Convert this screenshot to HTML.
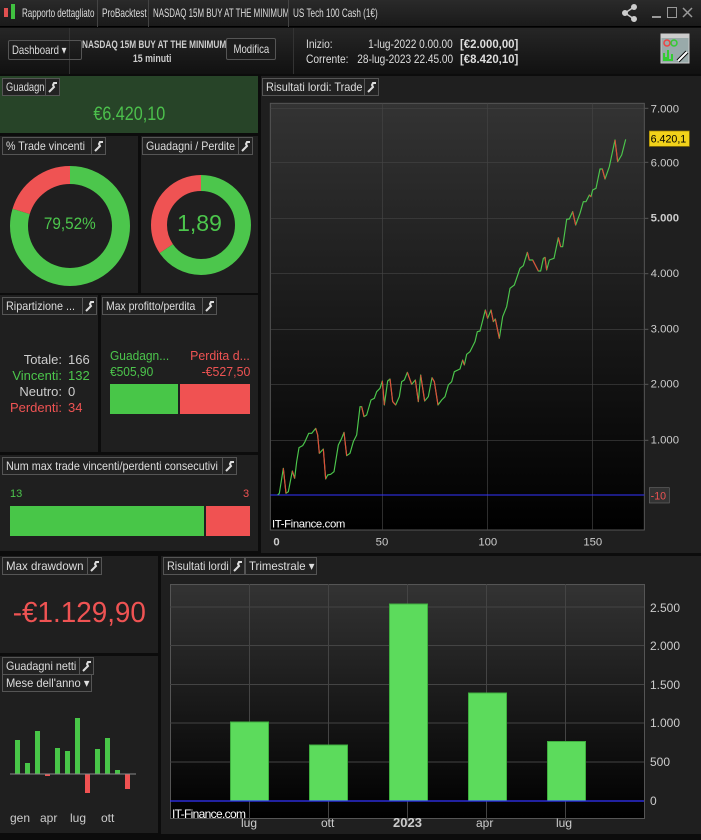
<!DOCTYPE html>
<html><head><meta charset="utf-8"><style>
*{margin:0;padding:0;box-sizing:border-box}
body{width:701px;height:840px;background:#0c0c0c;font-family:"Liberation Sans",sans-serif;color:#ddd;position:relative;overflow:hidden;font-size:11px}
.abs{position:absolute;white-space:nowrap}
.p{position:absolute;background:#1f1f1f}
.t{display:inline-block;transform:scaleX(.74);transform-origin:0 50%;white-space:nowrap}
.tc{display:inline-block;transform:scaleX(.8);transform-origin:50% 50%;white-space:nowrap}
.tag{position:absolute;height:18px;border:1px solid #555;background:#222;color:#ddd;font-size:12px;line-height:16px;padding-left:3px;white-space:nowrap;overflow:hidden}
.w{position:absolute;width:15px;height:18px;border:1px solid #555;background:#222}
.w svg{position:absolute;left:2px;top:3px}
</style></head><body>
<!-- top title bar -->
<div class="abs" style="left:0;top:0;width:701px;height:27px;background:linear-gradient(#2a2a2a,#1a1a1a);border-bottom:1px solid #000"></div>
<div class="abs" style="left:4px;top:8px;width:4px;height:9px;background:#e05050"></div>
<div class="abs" style="left:11px;top:4px;width:4px;height:15px;background:#40c040"></div>
<div class="abs" style="left:22px;top:6px;font-size:12px"><span class="t" style="transform:scaleX(.67)">Rapporto dettagliato</span></div>
<div class="abs" style="left:97px;top:0;width:1px;height:27px;background:#444"></div>
<div class="abs" style="left:102px;top:6px;font-size:12px"><span class="t" style="transform:scaleX(.69)">ProBacktest</span></div>
<div class="abs" style="left:148px;top:0;width:1px;height:27px;background:#444"></div>
<div class="abs" style="left:153px;top:6px;font-size:12px"><span class="t" style="transform:scaleX(.66)">NASDAQ 15M BUY AT THE MINIMUM</span></div>
<div class="abs" style="left:288px;top:0;width:1px;height:27px;background:#444"></div>
<div class="abs" style="left:293px;top:6px;font-size:12px"><span class="t" style="transform:scaleX(.68)">US Tech 100 Cash (1€)</span></div>
<svg class="abs" style="left:620px;top:3px" width="81" height="20"><g fill="#ccc" stroke="#ccc"><circle cx="14" cy="4" r="2.5"/><circle cx="5" cy="10" r="2.5"/><circle cx="14" cy="16" r="2.5"/><line x1="14" y1="4" x2="5" y2="10" stroke-width="1.5"/><line x1="5" y1="10" x2="14" y2="16" stroke-width="1.5"/></g><rect x="32" y="13" width="9" height="2" fill="#999"/><rect x="47.5" y="4.5" width="9" height="10" fill="none" stroke="#999"/><path d="M63 5 L72 14 M72 5 L63 14" stroke="#999" stroke-width="1.5"/></svg>
<!-- header -->
<div class="abs" style="left:0;top:28px;width:701px;height:46px;background:linear-gradient(#262626,#111)"></div>
<div class="abs" style="left:69px;top:28px;width:1px;height:46px;background:#333"></div>
<div class="abs" style="left:293px;top:28px;width:1px;height:46px;background:#333"></div>
<div class="abs" style="left:8px;top:40px;width:74px;height:20px;border:1px solid #555;border-radius:2px;font-size:12px;line-height:18px;padding-left:3px"><span class="t" style="transform:scaleX(.8)">Dashboard ▾</span></div>
<div class="abs" style="left:82px;top:38px;font-weight:bold;font-size:11px;line-height:14px;color:#ccc"><span class="t" style="transform:scaleX(.75)">NASDAQ 15M BUY AT THE MINIMUM</span></div>
<div class="abs" style="left:82px;top:52px;width:140px;text-align:center;font-weight:bold;font-size:11px;line-height:14px;color:#ccc"><span class="tc">15 minuti</span></div>
<div class="abs" style="left:226px;top:38px;width:50px;height:22px;border:1px solid #555;border-radius:2px;background:#1c1c1c;font-size:12px;line-height:20px;text-align:center"><span class="tc">Modifica</span></div>
<div class="abs" style="left:306px;top:37px;font-size:12px;line-height:15px;color:#ddd"><span class="t" style="transform:scaleX(.85)">Inizio:</span><br><span class="t" style="transform:scaleX(.85)">Corrente:</span></div>
<div class="abs" style="left:303px;top:37px;width:150px;font-size:12px;line-height:15px;color:#ddd;text-align:right"><span class="t" style="transform:scaleX(.84);transform-origin:100% 50%">1-lug-2022 0.00.00</span><br><span class="t" style="transform:scaleX(.84);transform-origin:100% 50%">28-lug-2023 22.45.00</span></div>
<div class="abs" style="left:460px;top:37px;font-size:12px;line-height:15px;color:#ddd;font-weight:bold"><span class="t" style="transform:scaleX(.95)">[€2.000,00]</span><br><span class="t" style="transform:scaleX(.95)">[€8.420,10]</span></div>
<svg class="abs" style="left:660px;top:33px" width="32" height="32"><rect x="1" y="1" width="28" height="29" fill="#9aa" stroke="#ccc"/><rect x="1" y="1" width="28" height="4" fill="#ccc"/><circle cx="7" cy="10" r="3" fill="none" stroke="#e44" stroke-width="1.5"/><circle cx="14" cy="10" r="3" fill="none" stroke="#3c3" stroke-width="1.5"/><path d="M3 28 V20 H5 V24 H7 V17 H9 V26 H11 V21 H13 V28Z" fill="#3c3"/><path d="M18 28 L27 19" stroke="#000" stroke-width="4"/><path d="M18 28 L27 19" stroke="#fff" stroke-width="2"/></svg>
<!-- Guadagno -->
<div class="p" style="left:0;top:76px;width:258px;height:57px;background:#274428"></div>
<div class="tag" style="left:2px;top:78px;width:44px"><span class="t" style="transform:scaleX(.78)">Guadagno</span></div><div class="w" style="left:45px;top:78px"><svg width="10" height="11"><path d="M9 1 L6 1 L5 3 L6 5 L1 10" stroke="#ddd" stroke-width="2" fill="none"/></svg></div>
<div class="abs" style="left:0;top:104px;width:258px;text-align:center;font-size:19px;color:#4cc04c"><span class="tc" style="transform:scaleX(.85)">€6.420,10</span></div>
<!-- % Trade vincenti -->
<div class="p" style="left:0;top:136px;width:138px;height:157px"></div>
<div class="tag" style="left:2px;top:137px;width:90px"><span class="t" style="transform:scaleX(.89)">% Trade vincenti</span></div><div class="w" style="left:91px;top:137px"><svg width="10" height="11"><path d="M9 1 L6 1 L5 3 L6 5 L1 10" stroke="#ddd" stroke-width="2" fill="none"/></svg></div>
<svg class="abs" style="left:0;top:136px" width="138" height="157"><circle cx="70" cy="90" r="51" fill="none" stroke="#4cc64c" stroke-width="18" stroke-dasharray="254.8 320.4" transform="rotate(-90 70 90)"/><circle cx="70" cy="90" r="51" fill="none" stroke="#ef5353" stroke-width="18" stroke-dasharray="0 254.8 65.6 0" transform="rotate(-90 70 90)"/></svg>
<div class="abs" style="left:0;top:214px;width:140px;text-align:center;font-size:17px;color:#4cc64c"><span class="tc" style="transform:scaleX(.9)">79,52%</span></div>
<!-- Guadagni/Perdite -->
<div class="p" style="left:141px;top:136px;width:117px;height:157px"></div>
<div class="tag" style="left:142px;top:137px;width:97px"><span class="t" style="transform:scaleX(.89)">Guadagni / Perdite</span></div><div class="w" style="left:238px;top:137px"><svg width="10" height="11"><path d="M9 1 L6 1 L5 3 L6 5 L1 10" stroke="#ddd" stroke-width="2" fill="none"/></svg></div>
<svg class="abs" style="left:141px;top:136px" width="117" height="157"><circle cx="60" cy="89" r="42" fill="none" stroke="#4cc64c" stroke-width="16" stroke-dasharray="172.6 263.9" transform="rotate(-90 60 89)"/><circle cx="60" cy="89" r="42" fill="none" stroke="#ef5353" stroke-width="16" stroke-dasharray="0 172.6 91.3 0" transform="rotate(-90 60 89)"/></svg>
<div class="abs" style="left:141px;top:210px;width:117px;text-align:center;font-size:23px;color:#4cc64c">1,89</div>
<!-- Ripartizione -->
<div class="p" style="left:0;top:295px;width:98px;height:157px"></div>
<div class="tag" style="left:2px;top:297px;width:81px"><span class="t" style="transform:scaleX(.9)">Ripartizione ...</span></div><div class="w" style="left:82px;top:297px"><svg width="10" height="11"><path d="M9 1 L6 1 L5 3 L6 5 L1 10" stroke="#ddd" stroke-width="2" fill="none"/></svg></div>
<div class="abs" style="left:0;top:352px;width:62px;text-align:right;font-size:13px;line-height:16px"><span style="color:#ccc">Totale:</span><br><span style="color:#4cc64c">Vincenti:</span><br><span style="color:#ccc">Neutro:</span><br><span style="color:#ef5353">Perdenti:</span></div>
<div class="abs" style="left:68px;top:352px;font-size:13px;line-height:16px"><span style="color:#ccc">166</span><br><span style="color:#4cc64c">132</span><br><span style="color:#ccc">0</span><br><span style="color:#ef5353">34</span></div>
<!-- Max profitto -->
<div class="p" style="left:101px;top:295px;width:157px;height:157px"></div>
<div class="tag" style="left:102px;top:297px;width:101px"><span class="t" style="transform:scaleX(.87)">Max profitto/perdita</span></div><div class="w" style="left:202px;top:297px"><svg width="10" height="11"><path d="M9 1 L6 1 L5 3 L6 5 L1 10" stroke="#ddd" stroke-width="2" fill="none"/></svg></div>
<div class="abs" style="left:110px;top:348px;font-size:13px;color:#4cc64c;line-height:16px"><span class="t" style="transform:scaleX(.92)">Guadagn...</span><br><span class="t" style="transform:scaleX(.92)">€505,90</span></div>
<div class="abs" style="left:130px;top:348px;width:120px;text-align:right;font-size:13px;color:#ef5353;line-height:16px"><span class="t" style="transform:scaleX(.95);transform-origin:100% 50%">Perdita d...</span><br><span class="t" style="transform:scaleX(.95);transform-origin:100% 50%">-€527,50</span></div>
<div class="abs" style="left:110px;top:384px;width:68px;height:30px;background:#48c648"></div>
<div class="abs" style="left:180px;top:384px;width:70px;height:30px;background:#f05252"></div>
<!-- Num max -->
<div class="p" style="left:0;top:455px;width:258px;height:96px"></div>
<div class="tag" style="left:2px;top:457px;width:221px"><span class="t" style="transform:scaleX(.9)">Num max trade vincenti/perdenti consecutivi</span></div><div class="w" style="left:222px;top:457px"><svg width="10" height="11"><path d="M9 1 L6 1 L5 3 L6 5 L1 10" stroke="#ddd" stroke-width="2" fill="none"/></svg></div>
<div class="abs" style="left:10px;top:488px;font-size:11px;color:#4cc64c">13</div>
<div class="abs" style="left:243px;top:488px;font-size:11px;color:#ef5353">3</div>
<div class="abs" style="left:10px;top:506px;width:194px;height:30px;background:#48c648"></div>
<div class="abs" style="left:206px;top:506px;width:44px;height:30px;background:#f05252"></div>
<!-- Right equity chart panel -->
<div class="p" style="left:261px;top:76px;width:440px;height:477px"></div>
<div class="tag" style="left:262px;top:78px;width:103px"><span class="t" style="transform:scaleX(.91)">Risultati lordi: Trade</span></div><div class="w" style="left:364px;top:78px"><svg width="10" height="11"><path d="M9 1 L6 1 L5 3 L6 5 L1 10" stroke="#ddd" stroke-width="2" fill="none"/></svg></div>
<svg class="abs" style="left:260px;top:95px" width="441" height="460" viewBox="0 0 1323 1380">
<defs><linearGradient id="g1" x1="0" y1="0" x2="0" y2="1"><stop offset="0" stop-color="#333"/><stop offset="1" stop-color="#000"/></linearGradient></defs>
<rect x="31" y="25" width="1122" height="1280" fill="url(#g1)" stroke="#555" stroke-width="3"/>
<g stroke="#444" stroke-width="2"><line x1="31" y1="40" x2="1153" y2="40"/><line x1="31" y1="202" x2="1153" y2="202"/><line x1="31" y1="370" x2="1153" y2="370"/><line x1="31" y1="536" x2="1153" y2="536"/><line x1="31" y1="703" x2="1153" y2="703"/><line x1="31" y1="868" x2="1153" y2="868"/><line x1="31" y1="1036" x2="1153" y2="1036"/><line x1="368" y1="25" x2="368" y2="1305"/><line x1="682" y1="25" x2="682" y2="1305"/><line x1="997" y1="25" x2="997" y2="1305"/></g>
<line x1="31" y1="1200" x2="1153" y2="1200" stroke="#3333ff" stroke-width="3"/>
<g font-family="Liberation Sans" font-size="34" fill="#ccc"><text x="1172" y="52">7.000</text><text x="1172" y="214">6.000</text><text x="1172" y="380" font-weight="bold">5.000</text><text x="1172" y="546">4.000</text><text x="1172" y="713">3.000</text><text x="1172" y="878">2.000</text><text x="1172" y="1046">1.000</text><text x="40" y="1352" font-weight="bold">0</text><text x="347" y="1352">50</text><text x="655" y="1352">100</text><text x="970" y="1352">150</text><text x="36" y="1298" fill="#fff" textLength="220">IT-Finance.com</text></g>
<g stroke="#555" stroke-width="3"><line x1="1153" y1="40" x2="1165" y2="40"/><line x1="1153" y1="202" x2="1165" y2="202"/><line x1="1153" y1="370" x2="1165" y2="370"/><line x1="1153" y1="536" x2="1165" y2="536"/><line x1="1153" y1="703" x2="1165" y2="703"/><line x1="1153" y1="868" x2="1165" y2="868"/><line x1="1153" y1="1036" x2="1165" y2="1036"/></g>
<rect x="1168" y="108" width="120" height="46" fill="#f2d21a" stroke="#a08000" stroke-width="2"/><text x="1172" y="143" font-family="Liberation Sans" font-size="32" fill="#000">6.420,1</text>
<rect x="1168" y="1178" width="60" height="46" fill="#333" stroke="#666" stroke-width="2"/><text x="1172" y="1213" font-family="Liberation Sans" font-size="32" fill="#ef5353">-10</text>
<polyline fill="none" stroke="#4cc64c" stroke-width="3.5" stroke-linejoin="round" points="53,1200 58,1195 70,1120 78,1195 85,1190 97,1128 104,1150 110,1100 117,1058 128,1052 135,1040 146,1015 155,1015 167,1000 173,1020 178,1075 190,1062 197,1152 203,1140 212,1138 222,1130 235,1050 245,1030 252,1012 260,1082 270,1075 280,1040 290,1020 300,935 305,935 312,965 320,960 333,915 343,910 350,890 360,880 367,858 373,930 383,858 390,852 398,920 407,930 418,905 425,860 433,855 442,832 455,868 466,855 475,920 482,840 494,918 505,905 516,848 523,860 534,930 545,915 555,905 565,870 575,860 583,830 600,822 608,795 613,810 620,778 630,770 645,740 652,710 660,708 676,645 683,670 693,645 700,680 706,672 718,730 728,665 740,635 750,580 763,570 780,520 790,512 802,472 808,495 818,495 835,528 842,528 850,490 855,487 860,525 868,495 882,490 895,428 902,455 908,455 920,373 928,372 938,350 947,390 960,355 970,320 978,320 988,300 993,305 998,285 1008,280 1020,222 1027,222 1035,252 1048,215 1065,135 1073,200 1085,180 1097,133"/>
<path fill="none" stroke="#e04a3a" stroke-width="3.5" d="M70 1120L78 1195M97 1128L104 1150M167 1000L173 1020L178 1075M190 1062L197 1152M252 1012L260 1082M305 935L312 965M367 858L373 930M390 852L398 920L407 930M442 832L455 868M466 855L475 920M482 840L494 918M516 848L523 860L534 930M608 795L613 810M676 645L683 670M693 645L700 680M706 672L718 730M802 472L808 495M818 495L835 528M855 487L860 525M895 428L902 455M938 350L947 390M988 300L993 305M1027 222L1035 252M1065 135L1073 200"/>
</svg>
<!-- Max drawdown -->
<div class="p" style="left:0;top:556px;width:158px;height:97px"></div>
<div class="tag" style="left:2px;top:557px;width:86px"><span class="t" style="transform:scaleX(.96)">Max drawdown</span></div><div class="w" style="left:87px;top:557px"><svg width="10" height="11"><path d="M9 1 L6 1 L5 3 L6 5 L1 10" stroke="#ddd" stroke-width="2" fill="none"/></svg></div>
<div class="abs" style="left:0;top:597px;width:158px;text-align:center;font-size:29px;color:#ef5353"><span class="tc" style="transform:scaleX(.96)">-€1.129,90</span></div>
<!-- Guadagni netti -->
<div class="p" style="left:0;top:656px;width:158px;height:177px"></div>
<div class="tag" style="left:2px;top:657px;width:78px"><span class="t" style="transform:scaleX(.9)">Guadagni netti</span></div><div class="w" style="left:79px;top:657px"><svg width="10" height="11"><path d="M9 1 L6 1 L5 3 L6 5 L1 10" stroke="#ddd" stroke-width="2" fill="none"/></svg></div>
<div class="tag" style="left:2px;top:674px;width:90px"><span class="t" style="transform:scaleX(.93)">Mese dell'anno ▾</span></div>
<svg class="abs" style="left:0;top:656px" width="158" height="177">
<g fill="#48c648"><rect x="15" y="84" width="5" height="34"/><rect x="25" y="107" width="5" height="11"/><rect x="35" y="75" width="5" height="43"/><rect x="55" y="92" width="5" height="26"/><rect x="65" y="95" width="5" height="23"/><rect x="75" y="62" width="5" height="56"/><rect x="95" y="93" width="5" height="25"/><rect x="105" y="82" width="5" height="36"/><rect x="115" y="114" width="5" height="4"/></g>
<g fill="#f05252"><rect x="45" y="118" width="5" height="2"/><rect x="85" y="118" width="5" height="19"/><rect x="125" y="118" width="5" height="15"/></g>
<line x1="10" y1="118" x2="136" y2="118" stroke="#888" stroke-width="1"/>
<g font-family="Liberation Sans" font-size="12" fill="#ccc"><text x="10" y="166">gen</text><text x="40" y="166">apr</text><text x="70" y="166">lug</text><text x="101" y="166">ott</text></g>
</svg>
<!-- Risultati lordi bar chart -->
<div class="p" style="left:161px;top:556px;width:540px;height:278px"></div>
<div class="tag" style="left:163px;top:557px;width:68px"><span class="t" style="transform:scaleX(.9)">Risultati lordi</span></div><div class="w" style="left:230px;top:557px"><svg width="10" height="11"><path d="M9 1 L6 1 L5 3 L6 5 L1 10" stroke="#ddd" stroke-width="2" fill="none"/></svg></div>
<div class="tag" style="left:245px;top:557px;width:72px"><span class="t" style="transform:scaleX(.95)">Trimestrale ▾</span></div>
<svg class="abs" style="left:160px;top:550px" width="541" height="290">
<defs><linearGradient id="g2" x1="0" y1="0" x2="0" y2="1"><stop offset="0" stop-color="#333"/><stop offset="1" stop-color="#000"/></linearGradient></defs>
<rect x="10.5" y="34.5" width="474" height="234" fill="url(#g2)" stroke="#555"/>
<g stroke="#444"><line x1="10" y1="57" x2="484" y2="57"/><line x1="10" y1="95.5" x2="484" y2="95.5"/><line x1="10" y1="134.5" x2="484" y2="134.5"/><line x1="10" y1="173" x2="484" y2="173"/><line x1="10" y1="212" x2="484" y2="212"/><line x1="89.5" y1="34" x2="89.5" y2="275"/><line x1="168.5" y1="34" x2="168.5" y2="275"/><line x1="247.5" y1="34" x2="247.5" y2="275"/><line x1="326.5" y1="34" x2="326.5" y2="275"/><line x1="405.5" y1="34" x2="405.5" y2="275"/></g>
<g fill="#5cdb5c" stroke="#3fae3f"><rect x="70.5" y="172" width="38" height="79"/><rect x="149.5" y="195" width="38" height="56"/><rect x="229.5" y="54" width="38" height="197"/><rect x="308.5" y="143" width="38" height="108"/><rect x="387.5" y="191.5" width="38" height="59.5"/></g>
<line x1="10" y1="251" x2="484" y2="251" stroke="#3333ff" stroke-width="1.2"/>
<g font-family="Liberation Sans" font-size="12" fill="#ccc"><text x="490" y="62">2.500</text><text x="490" y="100">2.000</text><text x="490" y="139">1.500</text><text x="490" y="177">1.000</text><text x="490" y="216">500</text><text x="490" y="255">0</text><text x="81" y="277">lug</text><text x="161" y="277">ott</text><text x="233" y="277" font-weight="bold" font-size="13">2023</text><text x="316" y="277">apr</text><text x="396" y="277">lug</text><text x="12" y="268" fill="#fff" textLength="74">IT-Finance.com</text></g>
</svg>
</body></html>
